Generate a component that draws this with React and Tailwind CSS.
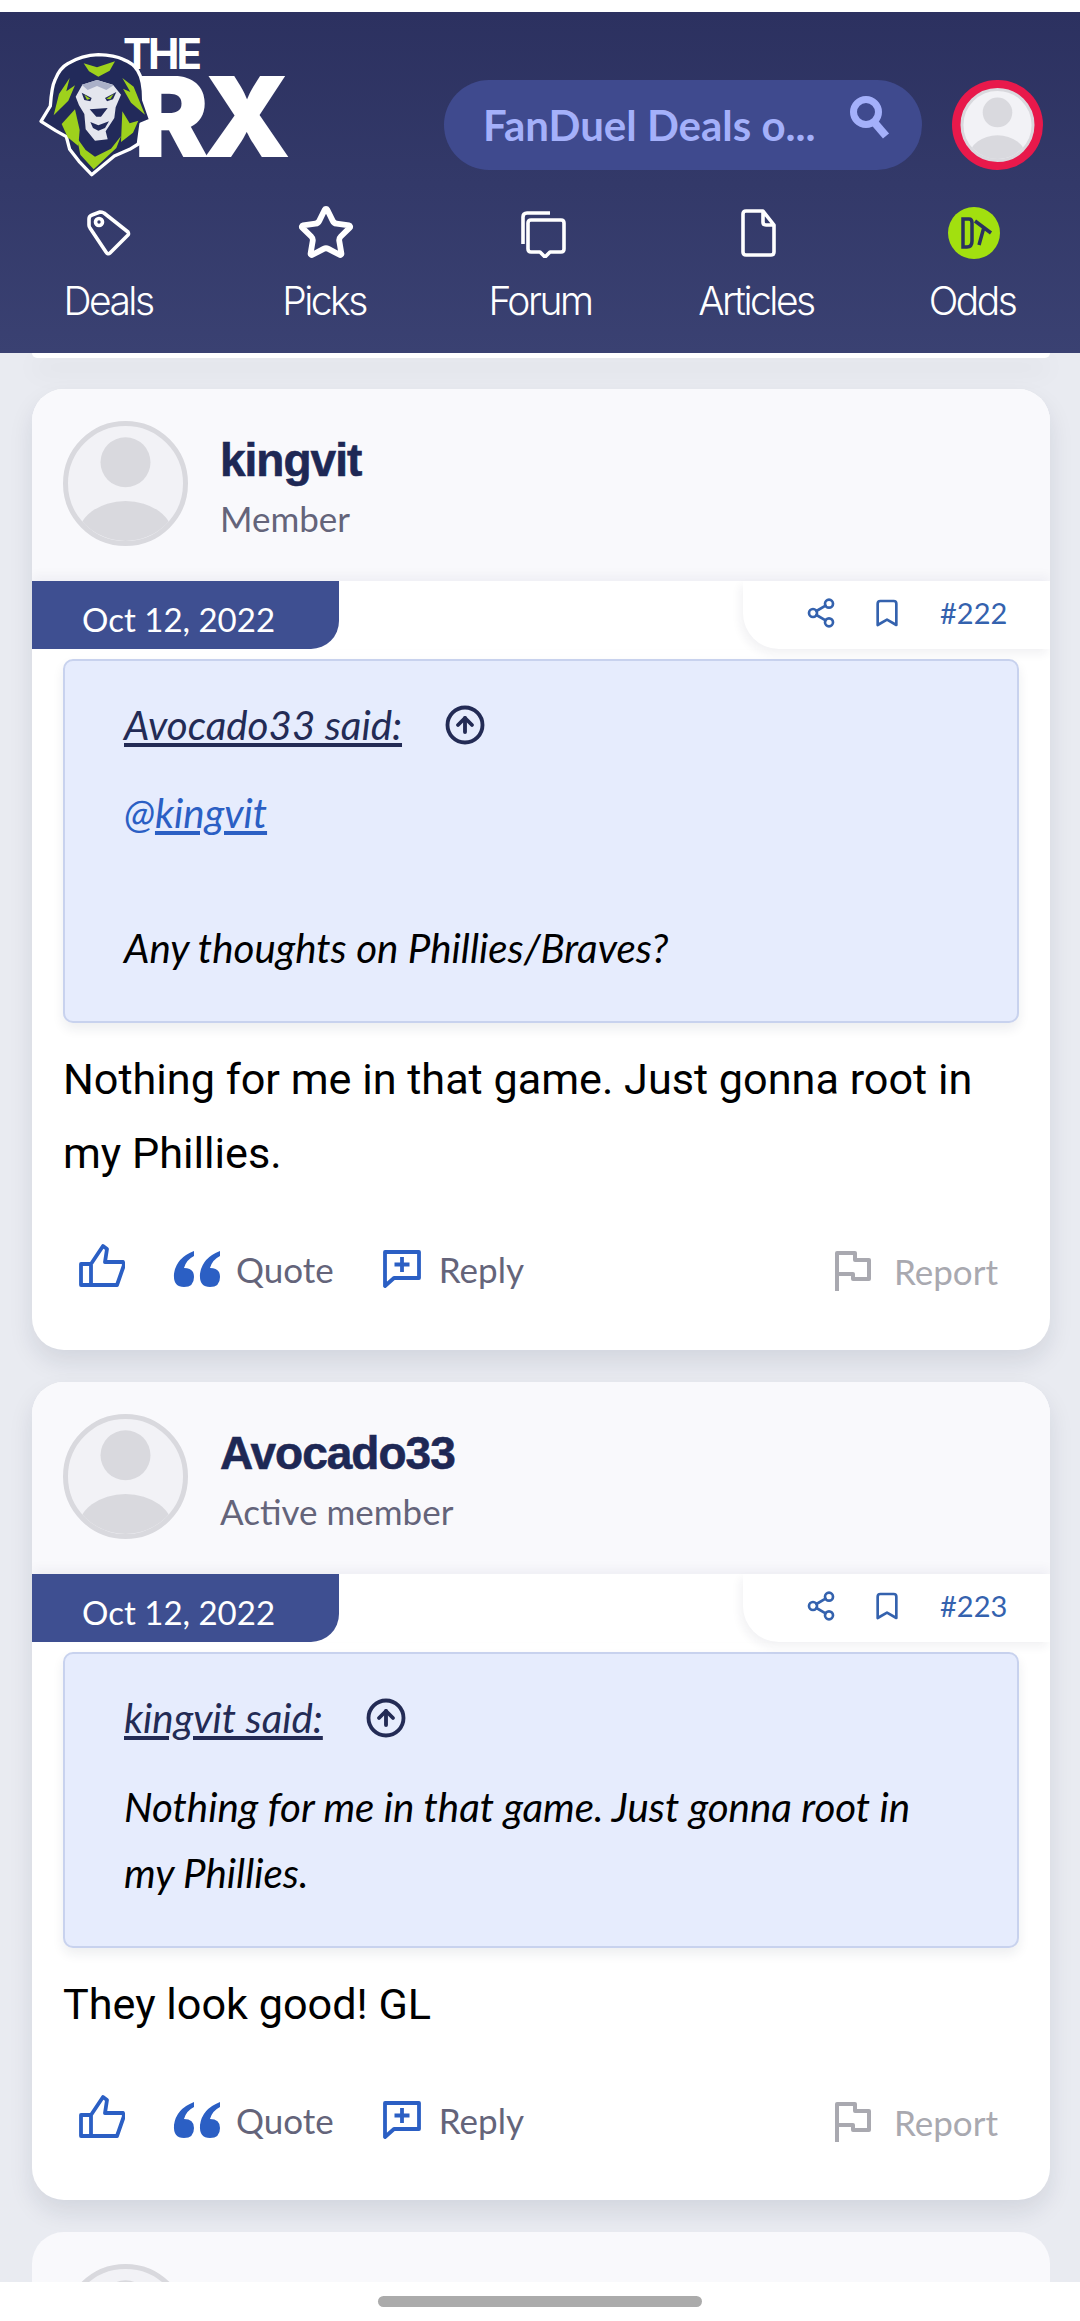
import React from "react";
import { Bookmark, CircleArrowUp, Share2, Star } from "lucide-react";

const NAV_ITEMS = [
  { id: "deals", label: "Deals" },
  { id: "picks", label: "Picks" },
  { id: "forum", label: "Forum" },
  { id: "articles", label: "Articles" },
  { id: "odds", label: "Odds" },
];

const POSTS = [
  {
    id: 222,
    user: "kingvit",
    role: "Member",
    quoteFrom: "Avocado33 said:",
    mention: "@kingvit",
    quote: "Any thoughts on Phillies/Braves?",
    body: "Nothing for me in that game. Just gonna root in my Phillies.",
  },
  {
    id: 223,
    user: "Avocado33",
    role: "Active member",
    quoteFrom: "kingvit said:",
    quote: "Nothing for me in that game. Just gonna root in my Phillies.",
    body: "They look good! GL",
  },
];

const LionLogo = () => (
  <svg viewBox="0 0 375 390" className="absolute left-[35px] top-[38px] z-10 h-[130px] w-[125px]">
    <path fill="#222a5a" stroke="#fff" strokeWidth="10" strokeLinejoin="round" d="M190 14 Q240 16 264 28 Q296 40 308 62 Q326 90 326 150 L347 210 L318 222 L310 282 L284 298 L238 318 L170 374 L132 334 L104 298 L94 260 L62 242 L18 214 L46 168 Q50 110 60 90 Q74 54 100 40 Q140 16 190 14 Z" />
    <g fill="#9ed11c">
      <path d="M146 40 L186 52 L240 34 L224 62 L190 80 L162 64 Z" />
      <path d="M104 84 L72 132 L56 196 L100 152 L120 106 L94 124 Z" />
      <path d="M262 84 L296 110 L330 194 L288 158 L264 116 L286 126 Z" />
      <path d="M120 178 L80 222 L98 262 L130 288 L134 240 Z" />
      <path d="M262 184 L258 276 L294 248 L310 212 L284 220 Z" />
      <path d="M126 264 L136 314 L176 358 L244 294 L258 258 L228 296 L180 320 L152 300 Z" />
    </g>
    <path fill="#e4e6ee" d="M122 140 L142 104 L186 90 L234 104 L258 134 L242 172 L238 204 L212 244 L218 268 L180 272 L152 238 L148 192 L132 166 Z" />
    <path fill="#aab0c8" d="M140 104 L186 90 L236 106 L214 120 L186 108 L158 120 Z" />
    <path fill="#222a5a" d="M140 128 L170 144 L166 154 L148 150 Z M244 126 L210 144 L216 154 L234 148 Z M164 178 L218 174 L198 200 L184 200 Z M166 216 L190 226 L222 214 L210 234 L190 242 L174 234 Z" />
    <path fill="#9ed11c" d="M148 134 L166 146 L156 149 Z M236 132 L214 146 L226 148 Z" />
  </svg>
);

const SearchPill = () => (
  <div className="flex h-[90px] w-[478px] items-center justify-between rounded-full bg-[#3f4a8e] pl-[39px] pr-[30px]">
    <span className="font-['Lato',sans-serif] text-[42px] font-bold text-[#a4b0fa]">FanDuel Deals o...</span>
    <svg viewBox="0 0 44 44" className="mb-[16px] h-[44px] w-[44px]" fill="none" stroke="#a4b0fa">
      <circle cx="18" cy="17" r="12.5" strokeWidth="7" />
      <path d="M26 27 L38 41" strokeWidth="8" />
    </svg>
  </div>
);

const Avatar = ({ className }) => (
  <svg viewBox="0 0 100 100" className={className}>
    <defs>
      <clipPath id="avatar-clip">
        <circle cx="50" cy="50" r="46" />
      </clipPath>
    </defs>
    <circle cx="50" cy="50" r="48" fill="#f2f2f6" stroke="#d9d9de" strokeWidth="4" />
    <g clipPath="url(#avatar-clip)" fill="#d9d9de">
      <ellipse cx="50" cy="33" rx="20" ry="20" />
      <ellipse cx="50" cy="92" rx="38" ry="28" />
    </g>
  </svg>
);

const NavIcon = ({ id }) => {
  if (id === "picks") return <Star className="ml-[3px] h-[58px] w-[58px] text-white" strokeWidth={2.4} />;
  if (id === "odds") {
    return (
      <svg viewBox="0 0 52 52" className="ml-[4px] h-[52px] w-[52px]">
        <circle cx="26" cy="26" r="26" fill="#a2e00f" />
        <path d="M15 12 H21 Q24 12 24 16 V34 Q24 40 19 40 H15 Z M27 14 L43 26 M36 20 L31 38" fill="none" stroke="#2a3160" strokeWidth="3.5" />
      </svg>
    );
  }
  const paths = {
    deals: "M6 11 Q6 8 9 7 L17 4 Q19 4 21 5 L45 24 Q46 26 45 27 L27 45 Q25 47 23 44 L7 20 Q6 19 6 17 Z",
    forum: "M6 36 V9 Q6 5 10 5 H33 M14 44 Q11 44 11 41 V15 Q11 12 14 12 H44 Q47 12 47 15 V41 Q47 44 44 44 H33 L28 49 L23 44 Z",
    articles: "M13 3 H30 L41 17 V44 Q41 47 38 47 H13 Q10 47 10 44 V6 Q10 3 13 3 Z M30 3 V14 Q30 17 33 17 H41",
  };
  const shifted = id === "deals" ? "" : "ml-[4px]";
  return (
    <svg viewBox="0 0 50 50" className={`${shifted} h-[50px] w-[50px]`} fill="none" stroke="#fff" strokeWidth="3.6" strokeLinejoin="round">
      <path d={paths[id]} />
      {id === "deals" && <circle cx="16" cy="14" r="3.5" />}
    </svg>
  );
};

const Header = () => (
  <header className="relative z-20 h-[341px] bg-gradient-to-b from-[#2c3160] to-[#3a4172]">
    <LionLogo />
    <div className="absolute left-[123px] top-[26px] font-['Inter',sans-serif] text-[42px] leading-[32px] font-bold tracking-[-3px] text-white">THE</div>
    <div className="absolute left-[134px] top-[62px] font-['Inter',sans-serif] text-[112px] leading-[84px] font-black tracking-[-6px] text-white">RX</div>
    <div className="flex h-[190px] items-start justify-end gap-[30px] pr-[37px] pt-[68px]">
      <SearchPill />
      <div className="h-[90px] w-[91px] rounded-full bg-[#e8194b] p-[8px]">
        <Avatar className="h-full w-full" />
      </div>
    </div>
    <nav className="grid grid-cols-5">
      {NAV_ITEMS.map((item) => (
        <div key={item.id} className="flex flex-col items-center">
          <div className="flex h-[62px] items-center justify-center">
            <NavIcon id={item.id} />
          </div>
          <span className="mt-[12px] font-['Inter',sans-serif] text-[39px] leading-[50px] font-light tracking-[-2.5px] text-white">{item.label}</span>
        </div>
      ))}
    </nav>
  </header>
);

const ThumbIcon = () => (
  <svg viewBox="0 0 46 44" className="h-[44px] w-[46px]" fill="none" stroke="#2b5fc4" strokeWidth="3.8" strokeLinejoin="round">
    <path d="M2 20 H12 V41 H2 Z M12 20 L24 2 L28 5 L26 18 H44 L45 21 L38 41 H12" />
  </svg>
);

const QuoteIcon = () => (
  <svg viewBox="0 0 48 38" className="h-[38px] w-[48px]" fill="#2b5fc4">
    <path d="M21 1 Q3 8 1 24 Q0 37 11 37 Q21 37 21 27 Q21 18 11 18 Q13 10 21 6 Z M47 1 Q29 8 27 24 Q26 37 37 37 Q47 37 47 27 Q47 18 37 18 Q39 10 47 6 Z" />
  </svg>
);

const ReplyIcon = () => (
  <svg viewBox="0 0 38 38" className="h-[38px] w-[38px]" fill="none" stroke="#2b5fc4" strokeWidth="3.8" strokeLinejoin="round">
    <path d="M2 2 H36 V28 H11 L2 36 Z M19 7 V22 M11.5 14.5 H26.5" />
  </svg>
);

const FlagIcon = () => (
  <svg viewBox="0 0 36 40" className="h-[40px] w-[36px]" fill="none" stroke="#a9a9b0" strokeWidth="4" strokeLinejoin="round">
    <path d="M2 40 V2 H20 V9 H34 V28 H18 V23 H2" />
  </svg>
);

const PostActions = () => (
  <div className="mt-[49px] flex items-center pl-[47px] pr-[52px] font-['Lato',sans-serif] text-[35px]">
    <ThumbIcon />
    <div className="ml-[48px] flex translate-y-[3px] items-center gap-[15px] text-[#64647a]">
      <QuoteIcon />
      <span>Quote</span>
    </div>
    <div className="ml-[49px] flex translate-y-[3px] items-center gap-[18px] text-[#64647a]">
      <ReplyIcon />
      <span>Reply</span>
    </div>
    <div className="ml-auto flex translate-y-[5px] items-center gap-[23px] text-[#a9a9b0]">
      <FlagIcon />
      <span>Report</span>
    </div>
  </div>
);

const PostCard = ({ post }) => (
  <article className="overflow-hidden rounded-[32px] bg-white shadow-[0_12px_24px_rgba(20,25,60,0.1)]">
    <div className="flex h-[192px] items-start gap-[32px] bg-[#f9f9fc] pl-[31px] pt-[32px]">
      <Avatar className="h-[125px] w-[125px]" />
      <div className="pt-[12px]">
        <div className="font-['Liberation_Sans',sans-serif] text-[46px] leading-[54px] font-bold tracking-[-1px] text-[#1e2855] [-webkit-text-stroke:0.6px_#1e2855]">{post.user}</div>
        <div className="mt-[6px] font-['Lato',sans-serif] text-[35px] leading-[50px] text-[#64647a]">{post.role}</div>
      </div>
    </div>
    <div className="relative flex h-[68px] justify-between shadow-[0_-6px_10px_rgba(30,35,70,0.04)]">
      <div className="flex w-[307px] items-center rounded-br-[28px] bg-[#3e4f91] pl-[50px] pt-[10px] font-['Lato',sans-serif] text-[33px] text-white">Oct 12, 2022</div>
      <div className="flex w-[307px] items-center rounded-bl-[36px] bg-white pb-[4px] pl-[62px] text-[#3462ae] shadow-[-3px_5px_10px_rgba(30,35,70,0.06)]">
        <Share2 className="h-[32px] w-[32px]" strokeWidth={2} />
        <Bookmark className="ml-[34px] h-[32px] w-[32px]" strokeWidth={2} />
        <span className="ml-[37px] font-['Lato',sans-serif] text-[29px]">#{post.id}</span>
      </div>
    </div>
    <div className="px-[31px] pt-[10px]">
      <blockquote className="rounded-[10px] border-2 border-[#c8d2ee] bg-[#e6ecfd] pb-[40px] pl-[59px] pr-[60px] pt-[31px] font-['Lato',sans-serif] text-[40.3px] leading-[66px] text-black italic shadow-[0_6px_12px_rgba(30,35,70,0.08)]">
        <div className="flex items-center gap-[42px] text-[#232b55]">
          <span className="underline">{post.quoteFrom}</span>
          <CircleArrowUp className="h-[42px] w-[42px]" strokeWidth={2.2} />
        </div>
        {post.mention && (
          <div className="mt-[22px] mb-[69px] text-[#2b5fc4]">
            @<span className="underline">{post.mention.slice(1)}</span>
          </div>
        )}
        <p className="mt-[23px]">{post.quote}</p>
      </blockquote>
      <p className="mt-[20px] font-['Roboto',sans-serif] text-[43.2px] leading-[74px] text-black">{post.body}</p>
    </div>
    <PostActions />
    <div className="h-[57px]" />
  </article>
);

export default function App() {
  return (
    <div className="relative h-[2321px] w-[1080px] overflow-hidden bg-[#e9ebf1]">
      <div className="h-[12px] bg-white" />
      <Header />
      <main className="flex flex-col gap-[32px] pl-[32px] pr-[30px]">
        {/* tail of the previous post, mostly hidden under the header */}
        <div className="-mb-[1px] h-[5px] rounded-b-[20px] bg-white shadow-[0_12px_24px_rgba(20,25,60,0.1)]" />
        {POSTS.map((post) => (
          <PostCard key={post.id} post={post} />
        ))}
        <div className="h-[200px] rounded-t-[32px] bg-[#f9f9fc] pl-[31px] pt-[32px]">
          <Avatar className="h-[125px] w-[125px]" />
        </div>
      </main>
      <div className="absolute inset-x-0 bottom-0 z-30 flex h-[39px] items-start justify-center bg-white pt-[14px]">
        <div className="h-[11px] w-[324px] rounded-full bg-[#ababab]" />
      </div>
    </div>
  );
}
